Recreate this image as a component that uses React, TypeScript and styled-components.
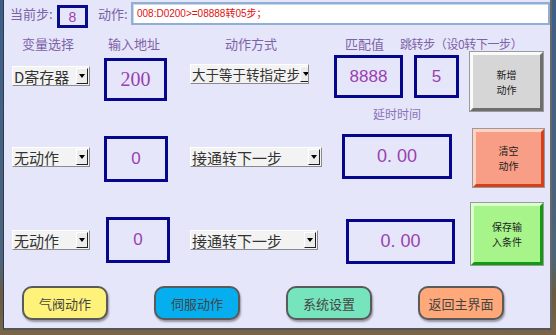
import React from 'react';
import styled, { createGlobalStyle } from 'styled-components';

const GlobalStyle = createGlobalStyle`
  html, body {
    margin: 0;
    padding: 0;
  }
  body {
    width: 556px;
    height: 335px;
    overflow: hidden;
    background: linear-gradient(to bottom, #3d5f86 0%, #4e6478 78%, #6b5a3e 88%, #7a6548 100%);
    font-family: 'Noto Sans CJK SC', sans-serif;
  }
`;

const Screen = styled.div`
  box-sizing: border-box;
  width: 549px;
  height: 330px;
  margin-left: 3px;
  background: #e6e6fa;
  border-left: 1px solid #2a3a5a;
  border-right: 2px solid #666;
  border-bottom: 2px solid #555;
  display: flex;
  flex-direction: column;
`;

const TopBar = styled.div`
  display: flex;
  align-items: flex-start;
  height: 23px;
  margin-top: 2px;
  padding-left: 6px;
`;

const TopLabel = styled.span<{ $w: number; $ml?: number }>`
  width: ${p => p.$w}px;
  margin-left: ${p => p.$ml ?? 0}px;
  font-size: 13px;
  line-height: 23px;
  color: #7862a8;
  white-space: nowrap;
`;

const StepBox = styled.div`
  box-sizing: border-box;
  width: 31px;
  height: 23px;
  margin-top: 3px;
  border: 3px solid #0a0a8c;
  display: flex;
  align-items: center;
  justify-content: center;
  font-family: 'Liberation Sans', sans-serif;
  font-size: 14px;
  color: #9b3fb0;
`;

const ActionField = styled.div`
  box-sizing: border-box;
  flex: 1;
  height: 23px;
  background: #fff;
  border: 2px solid #8fb0d4;
  box-shadow: inset 1px 1px 0 #c9d9ec;
  padding-left: 4px;
  font-size: 10px;
  line-height: 19px;
  color: #e01010;
  font-family: 'Liberation Sans', 'Noto Sans CJK SC', sans-serif;
`;

const Board = styled.div`
  display: grid;
  grid-template-columns: 92px 86px 144px 136px 74px;
  grid-template-rows: 15px 56px 92px 70px;
  align-items: start;
  justify-items: start;
  margin-top: 12px;
  padding-left: 8px;
`;

const HeadCell = styled.div<{ $span?: number }>`
  display: flex;
  grid-column: span ${p => p.$span ?? 1};
`;

const HeadLabel = styled.span<{ $ml?: number; $small?: boolean }>`
  margin-left: ${p => p.$ml ?? 0}px;
  font-size: ${p => (p.$small ? 12 : 13)}px;
  line-height: 14px;
  color: #7d62a8;
  white-space: nowrap;
  letter-spacing: ${p => (p.$small ? '-0.4px' : '0')};
`;

const SelectBox = styled.div<{ $w: number; $mt: number; $fs?: number }>`
  box-sizing: border-box;
  width: ${p => p.$w}px;
  height: 20px;
  margin-top: ${p => p.$mt}px;
  display: flex;
  align-items: center;
  justify-content: space-between;
  background: #f3f3f3;
  border-top: 1px solid #fff;
  border-left: 1px solid #fff;
  border-bottom: 1px solid #8a8a8a;
  border-right: 1px solid #8a8a8a;
  padding: 0 1px;
  font-size: ${p => p.$fs ?? 15}px;
  color: #333;
  white-space: nowrap;
  overflow: hidden;
`;

const Arrow = styled.span`
  box-sizing: border-box;
  flex: none;
  width: 12px;
  height: 16px;
  background: #ececec;
  border-top: 1px solid #fff;
  border-left: 1px solid #fff;
  border-right: 1px solid #222;
  border-bottom: 1px solid #222;
  display: flex;
  align-items: center;
  justify-content: center;

  &::after {
    content: '';
    border-left: 3.5px solid transparent;
    border-right: 3.5px solid transparent;
    border-top: 4px solid #000;
  }
`;

const ValueBox = styled.div<{ $w: number; $h: number; $mt: number; $ml?: number; $fs?: number; $serif?: boolean }>`
  box-sizing: border-box;
  width: ${p => p.$w}px;
  height: ${p => p.$h}px;
  margin-top: ${p => p.$mt}px;
  margin-left: ${p => p.$ml ?? 0}px;
  border: 3px solid #06068c;
  display: flex;
  align-items: center;
  justify-content: center;
  font-family: ${p => (p.$serif ? "'Liberation Serif', serif" : "'Liberation Sans', sans-serif")};
  font-size: ${p => p.$fs ?? 17}px;
  color: #9b3fb0;
  white-space: pre;
`;

const MatchGroup = styled.div`
  display: flex;
  gap: 11px;
  margin-top: 3px;
`;

const DelayGroup = styled.div`
  display: flex;
  flex-direction: column;
  align-items: center;
  gap: 14px;
  margin-left: 8px;
`;

const DelayLabel = styled.span`
  font-size: 12px;
  line-height: 12px;
  color: #8a72b8;
`;

const tones = {
  grey: { fill: '#d6d6d6', light: '#fafafa', dark: '#6e6e6e' },
  red: { fill: '#f89e86', light: '#ffd2c4', dark: '#d4401a' },
  green: { fill: '#a6f48a', light: '#dcffd0', dark: '#129a12' },
};

const BevelButton = styled.button<{ $tone: keyof typeof tones; $w: number; $h: number; $mt: number; $ml?: number }>`
  box-sizing: border-box;
  width: ${p => p.$w}px;
  height: ${p => p.$h}px;
  margin-top: ${p => p.$mt}px;
  margin-left: ${p => p.$ml ?? 0}px;
  padding: 0;
  background: ${p => tones[p.$tone].fill};
  border: 3px solid;
  border-color: ${p => `${tones[p.$tone].light} ${tones[p.$tone].dark} ${tones[p.$tone].dark} ${tones[p.$tone].light}`};
  outline: 1px solid #9a9a9a;
  font-family: 'Noto Sans CJK SC', sans-serif;
  font-size: 10px;
  line-height: 15px;
  color: #222;
  display: flex;
  align-items: center;
  justify-content: center;
  text-align: center;
`;

const NavBar = styled.div`
  display: flex;
  align-items: center;
  gap: 46px;
  height: 36px;
  margin-top: 15px;
  padding-left: 18px;
`;

const navColors = {
  yellow: '#fff27a',
  blue: '#05aeee',
  green: '#76e4bd',
  orange: '#ffa97a',
};

const NavButton = styled.button<{ $color: keyof typeof navColors }>`
  box-sizing: border-box;
  width: 86px;
  height: 34px;
  padding: 0;
  background: ${p => navColors[p.$color]};
  border: 2px solid #5a5a5a;
  border-radius: 10px;
  box-shadow: 1px 2px 2px rgba(0, 0, 0, 0.35);
  font-family: 'Noto Sans CJK SC', sans-serif;
  font-size: 13px;
  color: #444;
`;

interface SelectProps {
  label: string;
  width: number;
  top: number;
  size?: number;
}

const Select: React.FC<SelectProps> = ({ label, width, top, size }) => (
  <SelectBox $w={width} $mt={top} $fs={size}>
    <span>{label}</span>
    <Arrow />
  </SelectBox>
);

const App: React.FC = () => {
  return (
    <>
      <GlobalStyle />
      <Screen>
        <TopBar>
          <TopLabel $w={47}>当前步:</TopLabel>
          <StepBox>8</StepBox>
          <TopLabel $w={33} $ml={10}>动作:</TopLabel>
          <ActionField>008:D0200&gt;=08888转05步；</ActionField>
        </TopBar>

        <Board>
          <HeadCell><HeadLabel $ml={10}>变量选择</HeadLabel></HeadCell>
          <HeadCell><HeadLabel $ml={4}>输入地址</HeadLabel></HeadCell>
          <HeadCell><HeadLabel $ml={35}>动作方式</HeadLabel></HeadCell>
          <HeadCell $span={2}>
            <HeadLabel $ml={11}>匹配值</HeadLabel>
            <HeadLabel $ml={16} $small>跳转步（设0转下一步）</HeadLabel>
          </HeadCell>

          <Select label="D寄存器" width={78} top={14} />
          <ValueBox $w={63} $h={43} $mt={6} $fs={20} $serif>200</ValueBox>
          <Select label="大于等于转指定步" width={119} top={12} size={13.5} />
          <MatchGroup>
            <ValueBox $w={69} $h={43} $mt={0}>8888</ValueBox>
            <ValueBox $w={45} $h={43} $mt={0}>5</ValueBox>
          </MatchGroup>
          <BevelButton $tone="grey" $w={73} $h={59} $mt={0}>新增<br />动作</BevelButton>

          <Select label="无动作" width={78} top={39} />
          <ValueBox $w={64} $h={46} $mt={28}>0</ValueBox>
          <Select label="接通转下一步" width={132} top={39} />
          <DelayGroup>
            <DelayLabel>延时时间</DelayLabel>
            <ValueBox $w={110} $h={45} $mt={0} $fs={18}>0. 00</ValueBox>
          </DelayGroup>
          <BevelButton $tone="red" $w={71} $h={58} $mt={21} $ml={3}>清空<br />动作</BevelButton>

          <Select label="无动作" width={78} top={30} />
          <ValueBox $w={64} $h={46} $mt={17} $ml={2}>0</ValueBox>
          <Select label="接通转下一步" width={128} top={30} />
          <ValueBox $w={109} $h={45} $mt={19} $ml={12} $fs={18}>0. 00</ValueBox>
          <BevelButton $tone="green" $w={72} $h={62} $mt={3} $ml={1}>保存输<br />入条件</BevelButton>
        </Board>

        <NavBar>
          <NavButton $color="yellow">气阀动作</NavButton>
          <NavButton $color="blue">伺服动作</NavButton>
          <NavButton $color="green">系统设置</NavButton>
          <NavButton $color="orange">返回主界面</NavButton>
        </NavBar>
      </Screen>
    </>
  );
};

export default App;
